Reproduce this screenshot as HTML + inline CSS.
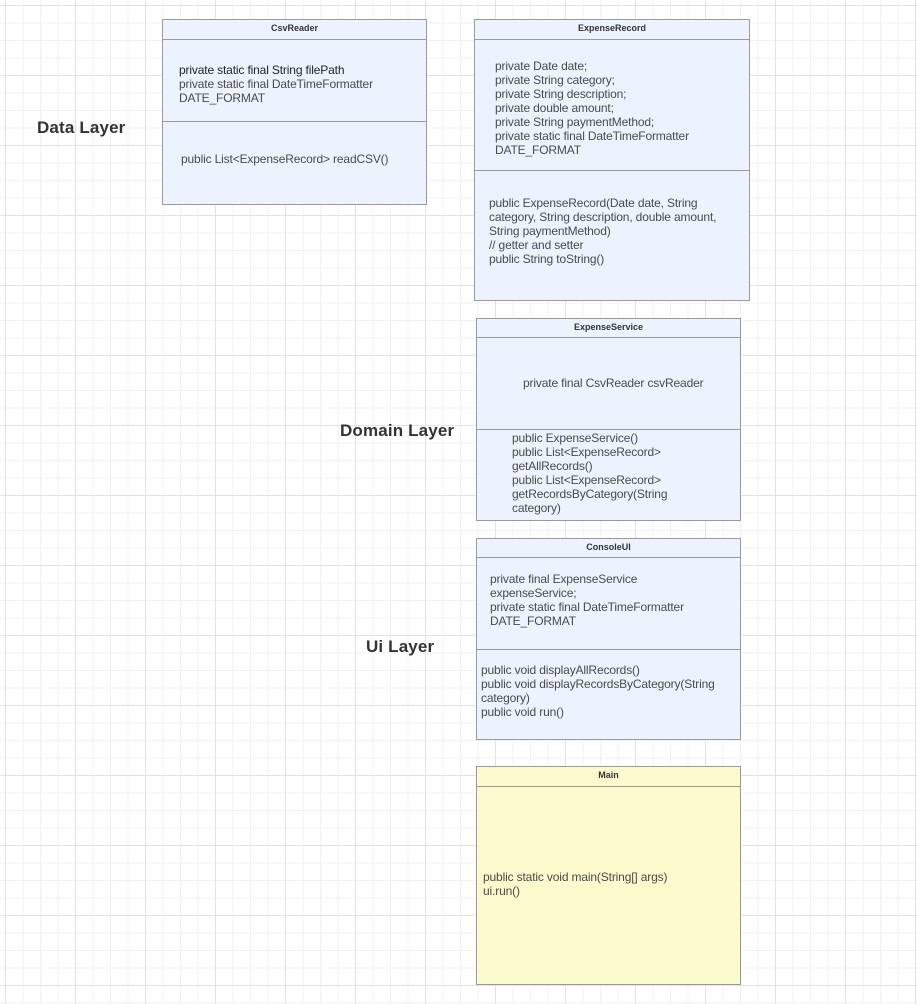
<!DOCTYPE html>
<html><head><meta charset="utf-8"><style>
html,body{margin:0;padding:0}
body{width:917px;height:1004px;position:relative;overflow:hidden;background-color:#fff;
background-image:
linear-gradient(to right,#e2e2e2 1px,transparent 1px),
linear-gradient(to bottom,#e2e2e2 1px,transparent 1px),
linear-gradient(to right,#f1f1f1 1px,transparent 1px),
linear-gradient(to bottom,#f1f1f1 1px,transparent 1px);
background-size:70px 70px,70px 70px,17.5px 17.5px,17.5px 17.5px;
background-position:5px 5px,5px 5px,5px 5px,5px 5px;
font-family:"Liberation Sans",Arial,sans-serif;color:#555}
.box{position:absolute;background:#ecf3fe;border:1px solid #9a9a9a;box-sizing:border-box}
.hd{position:absolute;left:0;right:0;top:0;border-bottom:1px solid #9a9a9a;font-size:9px;font-weight:bold;text-align:center;color:#333}
.dv{position:absolute;left:0;right:0;border-top:1px solid #9a9a9a}
.t{position:absolute;font-size:12px;line-height:14px;white-space:pre;color:#4a4a4a;letter-spacing:-0.15px}
.lbl{position:absolute;font-size:17px;font-weight:bold;color:#333;letter-spacing:0.15px}
</style></head><body>
<div class="lbl" style="left:37px;top:118px">Data Layer</div>
<div class="lbl" style="left:340px;top:421px">Domain Layer</div>
<div class="lbl" style="left:366px;top:637px">Ui Layer</div>

<div class="box" style="left:162px;top:19px;width:265px;height:186px">
<div class="hd" style="height:19px;line-height:17px">CsvReader</div>
<div class="dv" style="top:101px"></div>
<div class="t" style="left:16px;top:43px"><span style="color:#222">private static final String filePath</span>
private static final DateTimeFormatter
DATE_FORMAT</div>
<div class="t" style="left:18px;top:132px">public List&lt;ExpenseRecord&gt; readCSV()</div>
</div>

<div class="box" style="left:474px;top:19px;width:276px;height:282px">
<div class="hd" style="height:19px;line-height:17px">ExpenseRecord</div>
<div class="dv" style="top:150px"></div>
<div class="t" style="left:20px;top:39px">private Date date;
private String category;
private String description;
private double amount;
private String paymentMethod;
private static final DateTimeFormatter
DATE_FORMAT</div>
<div class="t" style="left:14px;top:176px">public ExpenseRecord(Date date, String
category, String description, double amount,
String paymentMethod)
// getter and setter
public String toString()</div>
</div>

<div class="box" style="left:476px;top:318px;width:265px;height:203px">
<div class="hd" style="height:18px;line-height:16px">ExpenseService</div>
<div class="dv" style="top:110px"></div>
<div class="t" style="left:46px;top:57px">private final CsvReader csvReader</div>
<div class="t" style="left:35px;top:112px">public ExpenseService()
public List&lt;ExpenseRecord&gt;
getAllRecords()
public List&lt;ExpenseRecord&gt;
getRecordsByCategory(String
category)</div>
</div>

<div class="box" style="left:476px;top:538px;width:265px;height:202px">
<div class="hd" style="height:18px;line-height:16px">ConsoleUI</div>
<div class="dv" style="top:110px"></div>
<div class="t" style="left:13px;top:33px">private final ExpenseService
expenseService;
private static final DateTimeFormatter
DATE_FORMAT</div>
<div class="t" style="left:4px;top:124px">public void displayAllRecords()
public void displayRecordsByCategory(String
category)
public void run()</div>
</div>

<div class="box" style="left:476px;top:766px;width:265px;height:219px;background:#fafacd">
<div class="hd" style="height:19px;line-height:17px">Main</div>
<div class="t" style="left:6px;top:103px">public static void main(String[] args)
ui.run()</div>
</div>
</body></html>
